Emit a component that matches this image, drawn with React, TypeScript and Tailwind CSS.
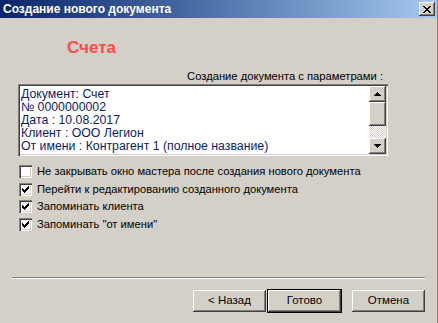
const raised =
  'bg-[#d4d0c8] shadow-[inset_-1px_-1px_#404040,inset_1px_1px_#ffffff,inset_-2px_-2px_#808080,inset_2px_2px_#d4d0c8]';
const sunken =
  'shadow-[inset_1px_1px_#808080,inset_2px_2px_#404040,inset_-1px_-1px_#ffffff,inset_-2px_-2px_#d4d0c8]';

const memoLines = [
  'Документ: Счет',
  '№ 0000000002',
  'Дата : 10.08.2017',
  'Клиент : ООО Легион',
  'От имени : Контрагент 1 (полное название)',
];

const options = [
  { label: 'Не закрывать окно мастера после создания нового документа', checked: false },
  { label: 'Перейти к редактированию созданного документа', checked: true },
  { label: 'Запоминать клиента', checked: true },
  { label: 'Запоминать "от имени"', checked: true },
];

function Check({ checked }: { checked: boolean }) {
  return (
    <div className={`flex size-[13px] shrink-0 items-center justify-center bg-white ${sunken}`}>
      {checked ? (
        <svg width="7" height="7" viewBox="0 0 7 7" shapeRendering="crispEdges">
          <path
            d="M6 0h1v1h-1zM5 1h2v1h-2zM0 2h1v1h-1zM4 2h3v1h-3zM0 3h2v1h-2zM3 3h3v1h-3zM0 4h5v1h-5zM1 5h3v1h-3zM2 6h1v1h-1z"
            fill="#000"
          />
        </svg>
      ) : null}
    </div>
  );
}

function Arrow({ down }: { down?: boolean }) {
  return (
    <div className={`flex h-[16px] w-[17px] items-center justify-center ${raised}`}>
      <svg width="7" height="4" viewBox="0 0 7 4" shapeRendering="crispEdges">
        <path d={down ? 'M0 0h7l-3.5 4z' : 'M3.5 0L7 4H0z'} fill="#000" />
      </svg>
    </div>
  );
}

function Button({ label, isDefault }: { label: string; isDefault?: boolean }) {
  return (
    <div className={isDefault ? 'border border-black' : 'p-px'}>
      <div className={`flex h-[22px] w-[73px] items-center justify-center text-[11.5px] text-black ${raised}`}>
        {label}
      </div>
    </div>
  );
}

export default function App() {
  return (
    <div
      className="flex h-[323px] w-[438px] flex-col overflow-hidden border-r border-[#808080] bg-[#d4d0c8] text-black"
      style={{ fontFamily: '"Liberation Sans", Arial, sans-serif' }}
    >
      <div className="flex h-[18px] shrink-0 items-center justify-between bg-gradient-to-r from-[#0a246a] to-[#a6caf0] pl-[3px] pr-[2px]">
        <span className="text-[12px] font-bold leading-none text-white">Создание нового документа</span>
        <div className={`flex h-[14px] w-[16px] items-center justify-center ${raised}`}>
          <svg width="8" height="7" viewBox="0 0 8 7" shapeRendering="crispEdges">
            <path d="M0 0h2l2 2.5L6 0h2L5 3.5L8 7H6L4 4.5L2 7H0l3-3.5z" fill="#000" />
          </svg>
        </div>
      </div>

      <div className="flex flex-1 flex-col pl-[18px] pr-[50px]">
        <div className="ml-[49px] mt-[21px] text-[17px] font-bold leading-[18px] text-[#ff4a4a]">Счета</div>
        <div className="mt-[12px] pr-[4px] text-right text-[11.2px] leading-[14px]">Создание документа с параметрами :</div>
        <div className={`mt-[1px] flex h-[72px] w-[370px] bg-white p-[2px] ${sunken}`}>
          <div className="flex-1 pl-[1px] pt-[2px] text-[12.3px] leading-[13px] text-[#0c1c6a]">
            {memoLines.map((line) => (
              <div key={line}>{line}</div>
            ))}
          </div>
          <div className="flex w-[17px] flex-col">
            <Arrow />
            <div className={`h-[24px] ${raised}`} />
            <div className="flex-1 bg-[repeating-conic-gradient(#ffffff_0_25%,#d4d0c8_0_50%)] bg-[length:2px_2px]" />
            <Arrow down />
          </div>
        </div>

        <div className="mt-[9px] flex flex-col gap-[4px] pl-[1px]">
          {options.map((o) => (
            <div key={o.label} className="flex h-[13.5px] items-center gap-[5px] text-[11.2px]">
              <Check checked={o.checked} />
              <span>{o.label}</span>
            </div>
          ))}
        </div>
      </div>

      <div className="mx-[12px] h-[2px] border-t border-b border-t-[#808080] border-b-white" />
      <div className="flex justify-end gap-[9px] pb-[10px] pr-[11px] pt-[10px]">
        <div className="flex">
          <Button label="< Назад" />
          <Button label="Готово" isDefault />
        </div>
        <Button label="Отмена" />
      </div>
    </div>
  );
}
